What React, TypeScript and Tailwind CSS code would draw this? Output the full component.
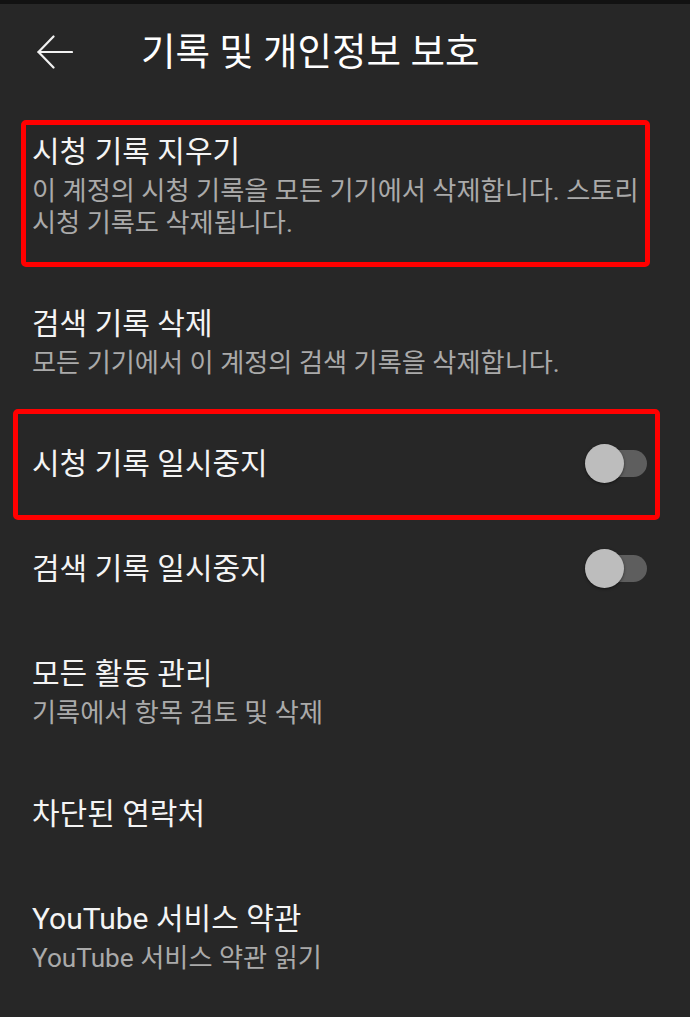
import type { ReactNode } from 'react'

const FONT = { fontFamily: 'Roboto, "Noto Sans CJK KR", "Noto Sans", sans-serif' }

interface RowProps {
  title: string
  sub?: string
  toggle?: boolean
  children?: ReactNode
}

function Toggle() {
  return (
    <div className="relative w-[62px] h-[40px] flex-shrink-0">
      <div className="absolute right-0 top-[6px] w-[50px] h-[27px] rounded-full bg-[#5e5e5e]" />
      <div className="absolute left-0 top-0 w-[39px] h-[39px] rounded-full bg-[#bdbdbd] shadow-[0_1px_3px_rgba(0,0,0,0.5)]" />
    </div>
  )
}

function Row({ title, sub, toggle, children }: RowProps) {
  return (
    <div className="relative flex items-center pl-8 pr-[36px] pt-[32px] pb-[33px]">
      <div className="flex-1 min-w-0">
        <p className="text-[30px] leading-[40px] text-[#f4f4f4] break-keep">{title}</p>
        {sub && (
          <p className="mt-[3px] text-[26.2px] leading-[32px] text-[#aaaaaa] break-keep">{sub}</p>
        )}
      </div>
      {toggle && <div className="pr-[7px]"><Toggle /></div>}
      {children}
    </div>
  )
}

export default function App() {
  return (
    <div className="min-h-screen w-[690px] bg-[#272727] overflow-hidden" style={FONT}>
      <div className="h-1 bg-[#121212]" />

      {/* Header */}
      <div className="h-24 flex items-center">
        <div className="w-[141px] flex items-center pl-[37px]">
          <svg width="36" height="34" viewBox="0 0 36 34" fill="none" stroke="#f1f1f1" strokeWidth="2.2" strokeLinecap="round" strokeLinejoin="round">
            <polyline points="16.5 1.5 1.5 17 16.5 32.5" />
            <line x1="1.5" y1="17" x2="35" y2="17" />
          </svg>
        </div>
        <h1 className="text-[37.5px] leading-[44px] text-white whitespace-nowrap">기록 및 개인정보 보호</h1>
      </div>

      <Row title="시청 기록 지우기" sub="이 계정의 시청 기록을 모든 기기에서 삭제합니다. 스토리 시청 기록도 삭제됩니다.">
        <div className="absolute left-[21px] top-[20px] w-[629px] h-[147px] border-[5px] border-[#ff0000] rounded-[5px] pointer-events-none" />
      </Row>
      <Row title="검색 기록 삭제" sub="모든 기기에서 이 계정의 검색 기록을 삭제합니다." />
      <Row title="시청 기록 일시중지" toggle>
        <div className="absolute left-[13px] top-[-3px] w-[647px] h-[111px] border-[5px] border-[#ff0000] rounded-[5px] pointer-events-none" />
      </Row>
      <Row title="검색 기록 일시중지" toggle />
      <Row title="모든 활동 관리" sub="기록에서 항목 검토 및 삭제" />
      <Row title="차단된 연락처" />
      <Row title="YouTube 서비스 약관" sub="YouTube 서비스 약관 읽기" />
    </div>
  )
}
